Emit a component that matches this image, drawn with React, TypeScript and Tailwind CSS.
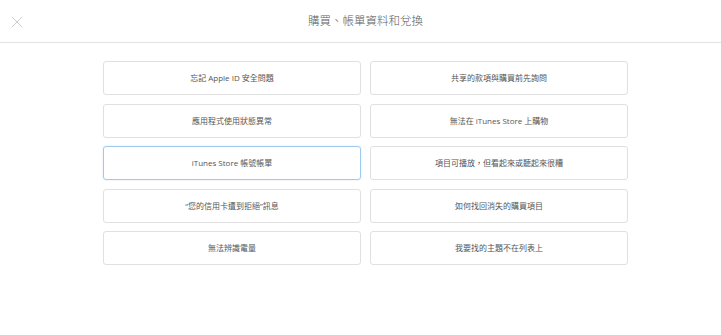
import { X } from "lucide-react";

const items: { label: string; active?: boolean }[] = [
  { label: "忘記 Apple ID 安全問題" },
  { label: "共享的款項與購買前先詢問" },
  { label: "應用程式使用狀態異常" },
  { label: "無法在 iTunes Store 上購物" },
  { label: "iTunes Store 帳號帳單", active: true },
  { label: "項目可播放，但看起來或聽起來很糟" },
  { label: "\u201C您的信用卡遭到拒絕\u201D訊息" },
  { label: "如何找回消失的購買項目" },
  { label: "無法辨識電量" },
  { label: "我要找的主題不在列表上" },
];

export default function App() {
  return (
    <div className="h-[335px] w-[721px] bg-white font-['Open_Sans','Noto_Sans_CJK_TC',sans-serif]">
      <header className="relative flex h-[43px] items-center justify-center border-b border-[#e3e3e3] pl-[10px]">
        <button className="absolute left-[7px] top-[12px] text-[#c8c8c8]">
          <X size={20} strokeWidth={1.1} />
        </button>
        <h1 className="text-[11.5px] font-light text-[#5a5a5a]">
          購買、帳單資料和兌換
        </h1>
      </header>

      <div className="ml-[103px] grid w-[525px] grid-cols-[258px_258px] gap-x-[9px] gap-y-[8.5px] pt-[18px]">
        {items.map((item) => (
          <div
            key={item.label}
            className={
              item.active
                ? "flex h-[34px] items-center justify-center rounded-[3px] border border-[#9fcbee] text-[8px] text-[#555] shadow-[0_0_2px_rgba(120,170,220,0.35)]"
                : "flex h-[34px] items-center justify-center rounded-[3px] border border-[#e0e0e0] text-[8px] text-[#555]"
            }
          >
            {item.label}
          </div>
        ))}
      </div>
    </div>
  );
}
